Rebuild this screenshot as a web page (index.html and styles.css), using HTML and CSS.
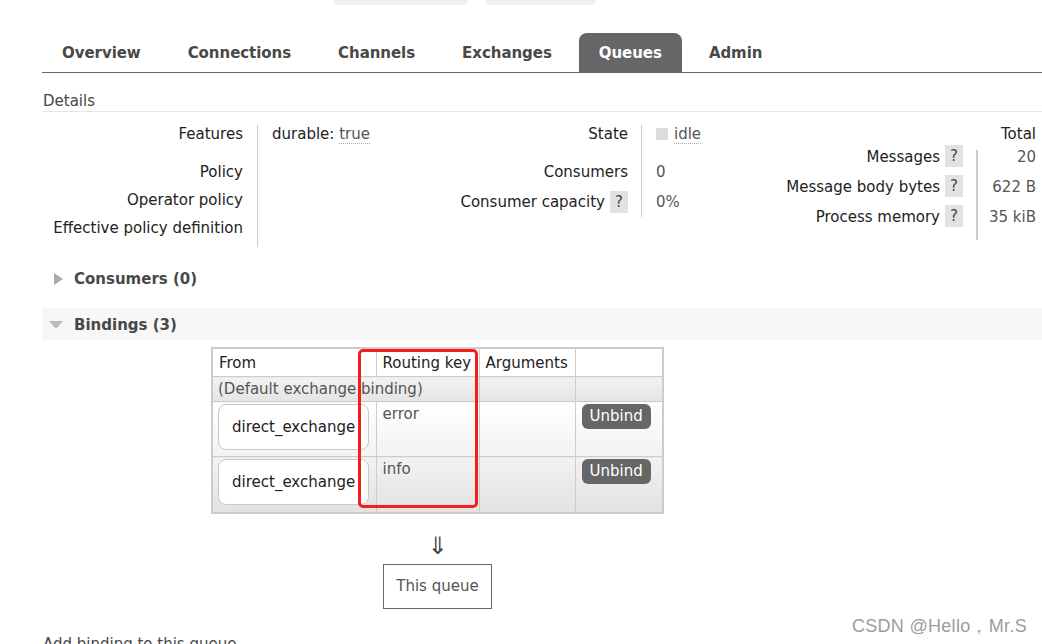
FILE: index.html
```html
<!DOCTYPE html>
<html lang="en">
<head>
<meta charset="utf-8">
<title>Queue</title>
<link rel="stylesheet" href="styles.css">
</head>
<body>
<div class="pills">
  <div class="pill pill-a"></div>
  <div class="pill pill-b"></div>
</div>
<div class="main">
  <ul class="tabs">
    <li>Overview</li>
    <li>Connections</li>
    <li>Channels</li>
    <li>Exchanges</li>
    <li class="active">Queues</li>
    <li>Admin</li>
  </ul>

  <h2 class="section-title">Details</h2>

  <div class="details">
    <div class="facts facts-1">
      <div class="lbl first">Features</div>
      <div class="val first"><span class="key">durable:</span> <abbr class="dotted">true</abbr></div>
      <div class="lbl">Policy</div>
      <div class="val"></div>
      <div class="lbl">Operator policy</div>
      <div class="val"></div>
      <div class="lbl">Effective policy definition</div>
      <div class="val"></div>
    </div>
    <div class="facts facts-2">
      <div class="lbl first">State</div>
      <div class="val first"><span class="state-box"></span><abbr class="dotted">idle</abbr></div>
      <div class="lbl">Consumers</div>
      <div class="val">0</div>
      <div class="lbl last">Consumer capacity <span class="help">?</span></div>
      <div class="val last">0%</div>
    </div>
    <div class="facts facts-3">
      <div class="lbl head"></div>
      <div class="val head">Total</div>
      <div class="lbl">Messages <span class="help">?</span></div>
      <div class="val sep top">20</div>
      <div class="lbl">Message body bytes <span class="help">?</span></div>
      <div class="val sep">622 B</div>
      <div class="lbl last">Process memory <span class="help">?</span></div>
      <div class="val sep last">35 kiB</div>
    </div>
  </div>

  <div class="toggle collapsed"><span class="tri-box"><span class="tri tri-right"></span></span>Consumers (0)</div>
  <div class="toggle expanded"><span class="tri-box"><span class="tri tri-down"></span></span>Bindings (3)</div>

  <div class="bindings">
    <table class="list">
      <colgroup>
        <col class="c-from"><col class="c-key"><col class="c-args"><col class="c-act">
      </colgroup>
      <thead>
        <tr><th>From</th><th>Routing key</th><th>Arguments</th><th></th></tr>
      </thead>
      <tbody>
        <tr class="row-default"><td colspan="2">(Default exchange binding)</td><td></td><td></td></tr>
        <tr class="row-odd">
          <td><span class="exch">direct_exchange</span></td>
          <td>error</td>
          <td></td>
          <td><span class="btn">Unbind</span></td>
        </tr>
        <tr class="row-even">
          <td><span class="exch">direct_exchange</span></td>
          <td>info</td>
          <td></td>
          <td><span class="btn">Unbind</span></td>
        </tr>
      </tbody>
    </table>
    <div class="highlight"></div>
    <div class="arrow">&#8659;</div>
    <div class="this-queue">This queue</div>
  </div>

  <div class="add-binding">Add binding to this queue</div>
</div>
<div class="watermark">CSDN @Hello，Mr.S</div>
</body>
</html>
```
FILE: styles.css
```css
html, body {
  margin: 0;
  padding: 0;
}
body {
  font-family: "DejaVu Sans", Verdana, sans-serif;
  font-size: 15px;
  color: #484848;
  background: #fff;
  overflow: hidden;
  height: 644px;
  position: relative;
}

.pills {
  display: flex;
  gap: 17px;
  padding-left: 333px;
  height: 5px;
}
.pill {
  height: 5px;
  background: #f0f0f0;
  border-radius: 0 0 8px 8px;
}
.pill-a { width: 135px; }
.pill-b { width: 111px; }

.main {
  margin-left: 42px;
  width: 1000px;
}

.tabs {
  list-style: none;
  margin: 28px 0 0 0;
  padding: 0;
  display: flex;
  border-bottom: 1px solid #666;
}
.tabs li {
  height: 38px;
  line-height: 38px;
  padding: 1px 20px 0 20px;
  margin-right: 7px;
  font-weight: bold;
  letter-spacing: -0.05px;
  color: #484848;
  border-radius: 8px 8px 0 0;
}
.tabs li.active {
  background: #666;
  color: #fff;
}

.section-title {
  margin: 19px 0 0 0;
  font-size: 15px;
  font-weight: normal;
  line-height: 18px;
  padding: 0 0 1px 1px;
  color: #484848;
  border-bottom: 1px solid #e6e6e6;
}

.details {
  display: flex;
  margin-top: 13px;
}
.facts {
  display: grid;
  align-content: start;
  line-height: 18px;
}
.facts-1 { grid-template-columns: 215px 183px; }
.facts-2 { grid-template-columns: 201px 119px; }
.facts-3 { grid-template-columns: 216px 66px; }

.lbl {
  text-align: right;
  color: #222;
  padding: 0 13px 10px 0;
  white-space: nowrap;
}
.facts-1 .lbl { padding-right: 14px; }
.val {
  color: #555;
  padding: 0 0 10px 14px;
  border-left: 1px solid #ccc;
  white-space: nowrap;
}
.lbl.first, .val.first { padding-bottom: 20px; }
.facts-2 .lbl.last, .facts-2 .val.last { padding-bottom: 4px; }
.facts-2 .val.last { padding-top: 2px; }
.facts-2 .lbl.last { display: flex; justify-content: flex-end; align-items: center; gap: 5px; }

.key { color: #222; }
abbr.dotted {
  text-decoration: none;
  border-bottom: 1px dotted #aaa;
  padding-bottom: 0;
}
.state-box {
  display: inline-block;
  width: 12px;
  height: 12px;
  background: #dcdcdc;
  margin-right: 6px;
  vertical-align: -1px;
}

.facts-3 .lbl, .facts-3 .val {
  padding-bottom: 0;
  height: 30px;
  box-sizing: border-box;
}
.facts-3 .lbl {
  display: flex;
  justify-content: flex-end;
  align-items: flex-start;
  gap: 5px;
  padding-top: 3px;
  line-height: 24px;
}
.facts-3 .val {
  text-align: right;
  padding: 6px 6px 0 0;
}
.facts-3 .head {
  height: 17px;
  border-left: 0;
  padding-top: 0;
  color: #222;
}
.facts-3 .val.sep {
  border-left: 0;
  background: linear-gradient(#ccc, #ccc) no-repeat left top / 2px 100%;
}
.facts-3 .val.sep.top {
  background: linear-gradient(#ccc, #ccc) no-repeat left bottom / 2px calc(100% - 8px);
}
.facts-3 .last { height: 38px; }

.help {
  display: inline-block;
  width: 18px;
  height: 22px;
  line-height: 22px;
  text-align: center;
  background: #e2e2e2;
  color: #444;
}

.toggle {
  display: flex;
  align-items: center;
  font-weight: bold;
  color: #484848;
}
.toggle.collapsed {
  margin-top: 22px;
  height: 20px;
}
.toggle.expanded {
  margin-top: 19px;
  height: 32px;
  padding-top: 1px;
  box-sizing: border-box;
  background: #f7f7f7;
}
.tri-box {
  width: 32px;
  display: flex;
  justify-content: flex-end;
}
.tri {
  display: block;
  width: 0;
  height: 0;
  margin-right: 11px;
}
.tri-right {
  border-left: 9px solid #aaa;
  border-top: 6px solid transparent;
  border-bottom: 6px solid transparent;
}
.tri-down {
  border-top: 8px solid #bbb;
  border-left: 7px solid transparent;
  border-right: 7px solid transparent;
}

.bindings {
  position: relative;
  margin: 7px 0 0 169px;
  width: 453px;
  display: flex;
  flex-direction: column;
  align-items: center;
}
.list {
  border-collapse: collapse;
  border: 2px solid #ccc;
  width: 453px;
  table-layout: fixed;
}
.c-from { width: 164px; }
.c-key { width: 103px; }
.c-args { width: 96px; }
.c-act { width: 88px; }
.list th, .list td {
  border: 1px solid #ccc;
  text-align: left;
  vertical-align: top;
  line-height: 18px;
  white-space: nowrap;
}
.list th {
  font-weight: normal;
  color: #222;
  padding: 5px 6px 4px 6px;
  background: #fff;
  height: 18px;
}
.list .row-default td {
  padding: 3px 6px 3px 6px;
  color: #555;
  background: linear-gradient(#f2f2f2, #e4e4e4);
  overflow: visible;
}
.list .row-default td:first-child { padding-left: 5px; }
.list .row-odd td, .list .row-even td {
  padding: 2px 6px 6px 6px;
  color: #555;
  height: 46px;
}
.list .row-odd td { padding-bottom: 5px; }
.list .row-odd td:first-child, .list .row-even td:first-child { padding-left: 5px; }
.list .row-odd td { background: linear-gradient(#fff, #f2f2f2); }
.list .row-even td { background: linear-gradient(#f2f2f2, #e2e2e2); }
.list .row-odd td:nth-child(2), .list .row-even td:nth-child(2) { padding-top: 3px; }

.exch {
  display: block;
  box-sizing: border-box;
  width: 151px;
  height: 46px;
  line-height: 44px;
  border: 1px solid #c8c8c8;
  border-radius: 8px;
  background: #fff;
  padding-left: 13px;
  color: #222;
  overflow: visible;
}
.btn {
  display: inline-block;
  background: #666;
  color: #fff;
  border-radius: 6px;
  padding: 0 8px;
  height: 25px;
  line-height: 25px;
}

.highlight {
  position: absolute;
  left: 147px;
  top: 2px;
  width: 120px;
  height: 159px;
  box-sizing: border-box;
  border: 3px solid #f31d1d;
  border-radius: 5px;
}

.arrow {
  margin-top: 20px;
  font-size: 24px;
  line-height: 24px;
  color: #444;
}
.this-queue {
  margin-top: 6px;
  border: 1px solid #666;
  padding: 0 12px;
  line-height: 43px;
  color: #555;
}

.add-binding {
  margin-top: 26px;
  margin-left: 1px;
  line-height: 18px;
  color: #484848;
}

.watermark {
  position: absolute;
  right: 15px;
  top: 614px;
  font-family: "Liberation Sans", Arial, sans-serif;
  font-size: 18px;
  color: #9c9c9c;
  text-shadow: 0 0 1px #fff;
  letter-spacing: 0.3px;
}
```
